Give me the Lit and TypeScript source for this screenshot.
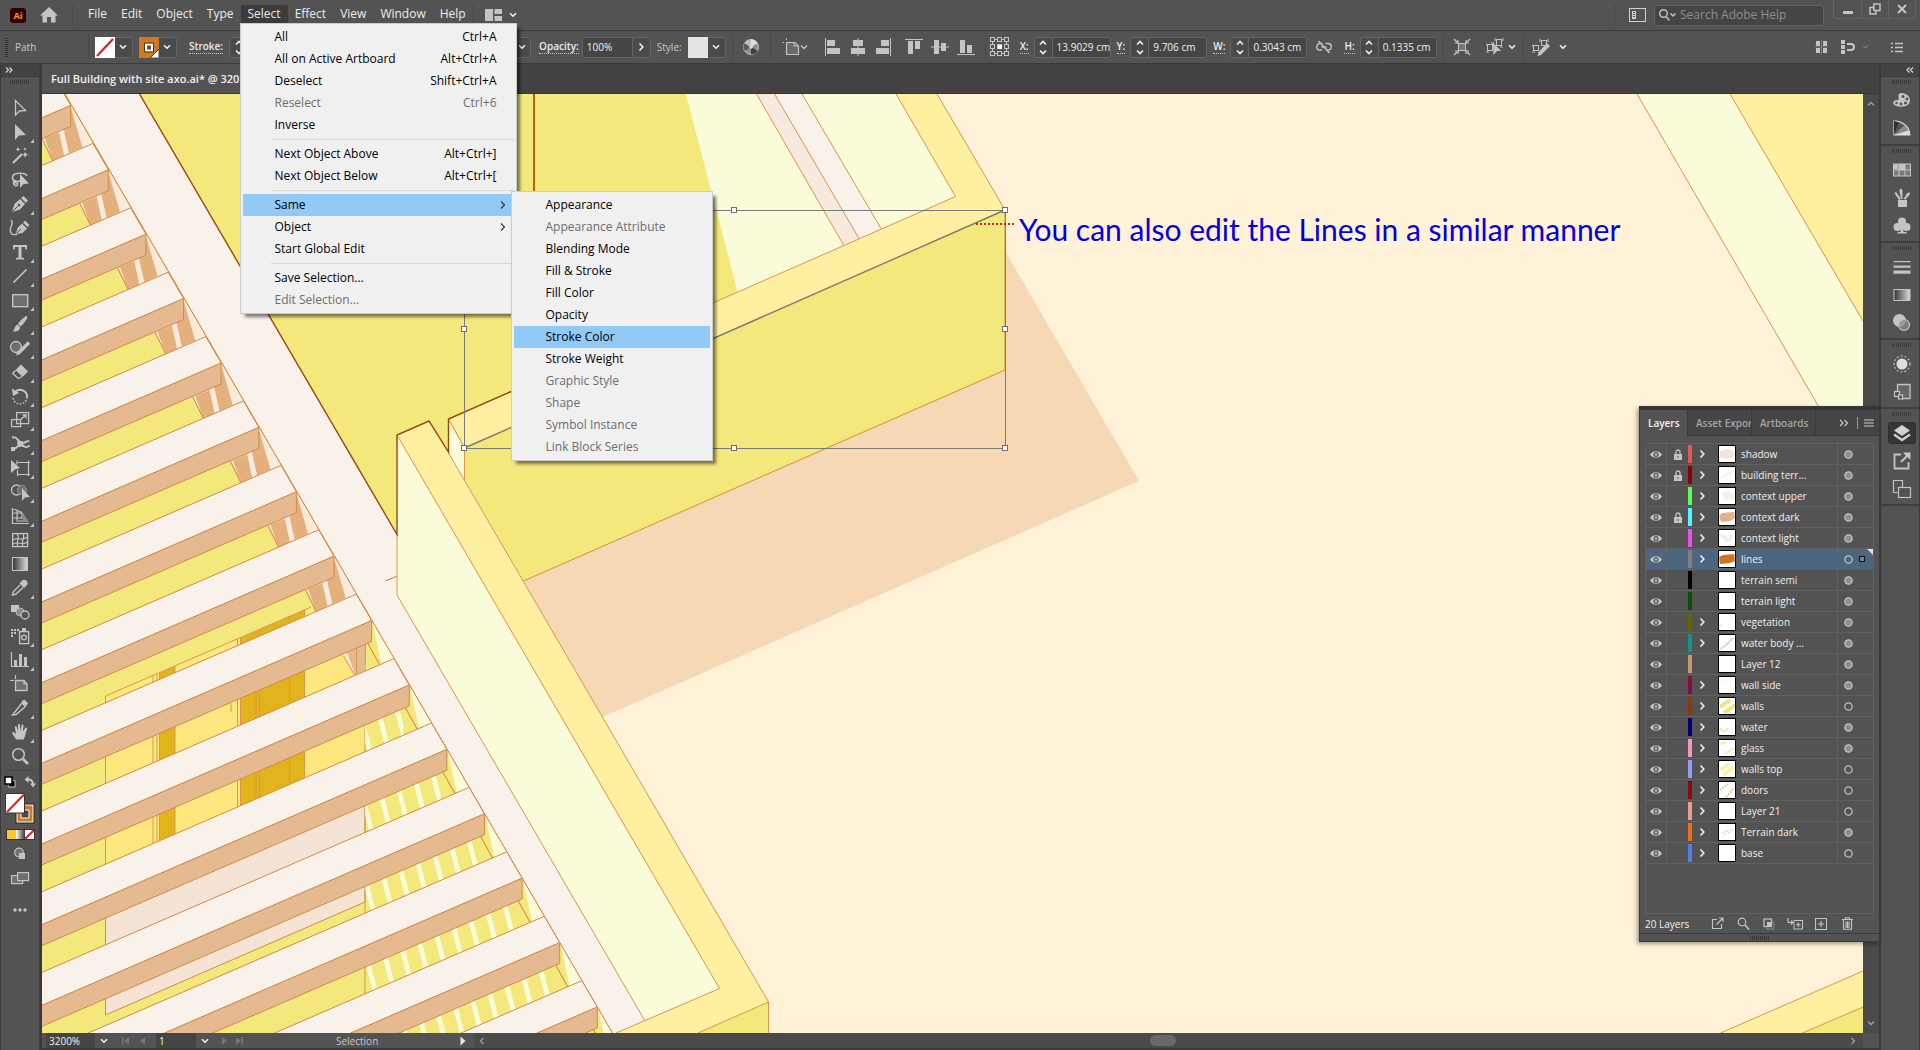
import { LitElement, html, css, svg, nothing, TemplateResult, SVGTemplateResult } from 'lit';
import { customElement, property } from 'lit/decorators.js';
import { classMap } from 'lit/directives/class-map.js';
import { styleMap } from 'lit/directives/style-map.js';

const icon = (w: number, h: number, body: SVGTemplateResult, cls = '') =>
  html`<svg class=${cls} width=${w} height=${h} viewBox="0 0 ${w} ${h}" aria-hidden="true">${body}</svg>`;

const chevDown = () =>
  icon(10, 8, svg`<path d="M2 2.2 5 5.2 8 2.2" fill="none" stroke="#f0f0f0" stroke-width="1.6"/>`);
const chevRight = () =>
  icon(8, 10, svg`<path d="M2.5 1.5 5.8 5 2.5 8.5" fill="none" stroke="#f0f0f0" stroke-width="1.6"/>`);

/* ---------- shared control styles ---------- */
const base = css`
  *, *::before, *::after { box-sizing: border-box; }
  button {
    font: inherit;
    color: inherit;
    background: none;
    border: 0;
    padding: 0;
    margin: 0;
    display: inline-flex;
    align-items: center;
    justify-content: center;
    flex: none;
  }
  input {
    font: inherit;
    color: #f0f0f0;
    background: #454545;
    border: 0;
    padding: 0;
    margin: 0;
    min-width: 0;
    outline: 0;
  }
  svg { display: block; flex: none; }
  ul { list-style: none; margin: 0; padding: 0; }
`;

/* ---------- artwork ---------- */
const STEP_X = 37.62;
const STEP_Y = 64.4;
const RAKE = 0.433;
const slatOrigin = (k: number) => ({ x: 371.6 + k * STEP_X, y: 620.5 + k * STEP_Y });
const range = (a: number, b: number) => Array.from({ length: b - a + 1 }, (_, i) => a + i);

@customElement('art-board')
class ArtBoard extends LitElement {
  static styles = [base, css`
    :host { display: block; position: relative; overflow: hidden; background: #fff2d8; }
    .art { position: absolute; inset: 0; width: 100%; height: 100%; }
    .note {
      position: absolute;
      left: 977px;
      top: 117px;
      margin: 0;
      font: 30px/36px Lato, "Open Sans", sans-serif;
      color: #0000e0;
      white-space: nowrap;
    }
    .y { fill: #f3e87b; }
    .top { fill: #feefa1; }
    .pale { fill: #fafbd9; }
    .cream { fill: #f9f2ea; }
    .lite { fill: #f8eadc; }
    .tan { fill: #e6ba91; }
    .post { fill: #e4b07d; }
    .shade { fill: #f6d8b5; }
    .win { fill: #ffe77f; }
    .gold { fill: #e1b41d; }
    .pink { fill: #f5e4d5; }
    .ln { fill: none; stroke: #d9964f; stroke-width: 1; }
    .edge { stroke: #cf8b48; stroke-width: 1; }
    .dark { fill: none; stroke: #9a4710; stroke-width: 1.4; }
    .sel { fill: none; stroke: #7c7a76; stroke-width: 1; }
    .handle { fill: #fff; stroke: #6e6e6e; stroke-width: 1; }
  `];

  private shape(cls: string, k: number, pts: number[][]) {
    const o = slatOrigin(k);
    return svg`<polygon class=${cls} points=${pts.map(([x, y]) => `${o.x + x},${o.y + y}`).join(' ')} />`;
  }

  private slat(k: number) {
    const { x, y } = slatOrigin(k);
    const left = 30;
    const at = (px: number, py: number) => py + (px - left) * RAKE;
    const qx = x - 15.3;
    const qy = y - 26.3;
    if (x < left) return nothing;
    return svg`
      <polygon class="tan edge" points="${x},${y} ${x},${y + 21} ${left},${at(x, y + 21)} ${left},${at(x, y)}"/>
      <polygon class="cream edge" points="${qx},${qy} ${x},${y} ${left},${at(x, y)} ${left},${at(qx, qy)}"/>`;
  }

  render() {
    return html`
      <svg class="art" viewBox="42 94 1821 939" preserveAspectRatio="xMinYMin slice" role="img" aria-label="Building axonometric">
        <defs>
          <clipPath id="deck"><polygon points="365,600 365,1040 599,1040 365,638"/></clipPath>
        </defs>
        <rect x="42" y="94" width="1900" height="1000" fill="#fff2d8"/>

        <polygon class="y" points="42,94 65,94 612,1033 42,1033"/>
        <polygon class="win" points="105.5,696 311,607 355,676 365,693 365,778 105.5,893"/>
        <polygon class="gold" points="159.5,673 175,666 175,862 159.5,869"/>
        <polygon class="gold" points="240.5,638 304.5,610 304.5,800 240.5,830"/>
        <path class="ln" d="M105.5 1015V696L311 607M153 675V865M157 674V865M159.5 673V865M175 666V860M237.5 639V820M240.5 638V820M256 631V820M259.5 630V820M289.5 616V800M304.5 610V800M231 703v9"/>
        <polygon class="pink edge" points="105.5,885 365,772 365,902 105.5,1015"/>
        <path class="ln" d="M365 650V995"/>
        <g clip-path="url(#deck)">
          ${range(-4, 13).map((n) => {
            const a = 380 + 0.26 * (600 - 800) + 19 * n;
            const b = 380 + 0.26 * (1040 - 800) + 19 * n;
            return svg`<polygon class="pale" points="${a},600 ${a + 5},600 ${b + 5},1040 ${b},1040"/>`;
          })}
        </g>
        ${range(-8, -1).map((k) => svg`
          ${this.shape('lite', k, [[-28.3, 34], [0, 0], [22.3, 38.6], [-17.7, 55.7]])}
          ${this.shape('post', k, [[-26, 33], [-11.6, 27], [-6.3, 51], [-17.7, 55.7]])}
          ${this.shape('post', k, [[-7, 24], [0.7, 4], [11.7, 42], [-1.7, 48]])}
          ${this.shape('ln', k, [[-28.3, 34], [-17.7, 55.7]])}
        `)}
        ${this.shape('lite', 0, [[-28, 34], [-20, 30], [-16.3, 55.5]])}
        ${this.shape('tan', 0, [[-24.5, 32], [-6.5, 22], [-6.5, 50], [-16.3, 55.5]])}
        <path class="ln" d="M343.5 656 355 676M356.5 648V675M365.5 642V672"/>
        ${range(0, 6).map((k) => svg`
          ${this.shape('y', k, [[-5, 20], [0, 0], [22.3, 38.6], [-6, 50]])}
          ${this.shape('pale', k, [[0.7, 1], [22.7, 38.6], [9.7, 43]])}
          ${this.shape('ln', k, [[-4, 22.5], [8, 44.3]])}
        `)}
        ${range(-8, 7).map((k) => this.slat(k))}

        <polygon class="cream" points="65,94 139.5,94 397,535 397,595 645,1021 617,1033 612,1033"/>
        <path class="ln" style="stroke:#cc7c35" d="M65 94 612.5 1033M386 580.7 396.7 576.3"/>
        <polygon class="y" points="139.5,94 686,94 738,291 465,448 448,452 429,421 397,435 397,534"/>
        <polygon class="pale" points="686,94 896,94 955.5,196.5 737.5,291.5"/>
        <polygon fill="#f7e9de" points="756.5,94 774.5,94 859,238.5 843.5,245"/>
        <polygon class="cream" points="774.5,94 802,94 881,228.5 859,238.5"/>
        <path class="ln" d="M756.5 94 843.5 245M774.5 94 859 238.5M802 94 881 228.5"/>
        <polygon class="shade" points="1005,251 1139,481 602.5,717 523,581 1005,370"/>
        <polygon class="top" points="448.5,419 955.5,196.5 896,94 937,94 1005,210 464.5,448"/>
        <path class="ln" d="M896 94 955.5 196.5 448.5 419 464.5 448M937 94 1005 210"/>
        <polygon class="y" points="464.5,448 1005,210 1005,370 523.5,581 464.5,480"/>
        <path class="ln" style="stroke:#d98c3a" d="M1005 210V370L523.5 581"/>
        <polygon class="pale" points="448.5,419 464.5,448 464.5,480 448.5,452"/>
        <path class="ln" d="M448.5 419 464.5 448V480"/>
        <polygon class="pale" points="397,435 397,595 645,1021 719.5,988.5"/>
        <polygon class="top" points="397,435 429,421 768.5,1002 698,1033 616,1033 719.5,988.5"/>
        <polygon class="y" points="768.5,1002 768.5,1033 698,1033"/>
        <path class="ln" d="M397 435 719.5 988.5 616 1033M397 534V595L645 1021M448.5 453 768.5 1002V1033M768.5 1002 698 1033"/>
        <path class="dark" d="M139.5 94 397 534.5V435L429 421 448.5 452V419L600 352.5"/>
        <path d="M534 94V260" fill="none" stroke="#b0651c" stroke-width="2"/>

        <polygon class="pale" points="1637,94 1730,94 1863,321 1863,483"/>
        <polygon class="top" points="1730,94 1863,94 1863,321"/>
        <path class="ln" d="M1637 94 1863 483M1730 94 1863 321"/>
        <polygon class="top" points="1720.5,1033 1863,971 1863,1033"/>
        <polygon class="y" points="1802.5,1033 1863,1007 1863,1033"/>
        <path class="ln" d="M1720.5 1033 1863 971M1802.5 1033 1863 1007"/>

        <path class="sel" d="M464.5 210.5H1005.5V448.5H464.5Z"/>
        <path class="sel" style="stroke-width:1.4" d="M464.5 448 1005 210"/>
        ${[[464, 329], [464, 448], [734, 210], [734, 448], [1005, 210], [1005, 329], [1005, 448]].map(([x, y]) =>
          svg`<rect class="handle" x=${x - 2.5} y=${y - 2.5} width="5" height="5"/>`)}
        <path d="M976 224H1016" stroke="#c8281e" stroke-width="2" stroke-dasharray="2 2"/>
      </svg>
      <p class="note">You can also edit the Lines in a similar manner</p>
    `;
  }
}

/* ---------- menu bar ---------- */
interface Entry { label?: string; keys?: string; off?: boolean; sub?: Entry[]; hot?: boolean; more?: boolean; }

const SAME: Entry[] = [
  { label: 'Appearance' }, { label: 'Appearance Attribute', off: true }, { label: 'Blending Mode' },
  { label: 'Fill & Stroke' }, { label: 'Fill Color' }, { label: 'Opacity' }, { label: 'Stroke Color', hot: true },
  { label: 'Stroke Weight' }, { label: 'Graphic Style', off: true }, { label: 'Shape', off: true },
  { label: 'Symbol Instance', off: true }, { label: 'Link Block Series', off: true },
];
const SELECT: Entry[] = [
  { label: 'All', keys: 'Ctrl+A' }, { label: 'All on Active Artboard', keys: 'Alt+Ctrl+A' },
  { label: 'Deselect', keys: 'Shift+Ctrl+A' }, { label: 'Reselect', keys: 'Ctrl+6', off: true }, { label: 'Inverse' }, {},
  { label: 'Next Object Above', keys: 'Alt+Ctrl+]' }, { label: 'Next Object Below', keys: 'Alt+Ctrl+[' }, {},
  { label: 'Same', hot: true, more: true, sub: SAME }, { label: 'Object', more: true }, { label: 'Start Global Edit' }, {},
  { label: 'Save Selection...' }, { label: 'Edit Selection...', off: true },
];

@customElement('menu-bar')
class MenuBar extends LitElement {
  static styles = [base, css`
    :host {
      display: flex;
      align-items: center;
      height: 31px;
      background: #535353;
      border-bottom: 1px solid #3a3a3a;
      font: 12px/16px "Open Sans", "Noto Sans", sans-serif;
      color: #ececec;
    }
    .logo { display: flex; align-items: center; justify-content: center; width: 16px; height: 15px; margin-left: 10px; background: #330000; border-radius: 3px; color: #ff9a00; font: 700 9px/15px "Open Sans", sans-serif; }
    .home { margin-left: 14px; }
    .rule { width: 1px; height: 20px; background: #484848; flex: none; }
    .home + .rule { margin-left: 14px; }
    .menus { display: flex; align-self: stretch; align-items: flex-start; padding: 5px 0 0 8px; }
    .menus > li { position: relative; display: flex; }
    .name { height: 18px; padding: 0 7px; border-radius: 2px 2px 0 0; }
    .open { background: #3b3b3b; }
    .layout { margin-left: 11px; gap: 6px; }
    .fill { flex: 1; }
    .screen { margin: 0 8px 0 14px; }
    .search { display: flex; align-items: center; width: 170px; height: 21px; background: #454545; border: 1px solid #636363; border-radius: 3px; padding-left: 3px; gap: 3px; }
    .search input { flex: 1; }
    .search input::placeholder { color: #8e8e8e; opacity: 1; }
    .window { display: flex; align-self: flex-start; margin: 0 4px 0 9px; border: 1px solid #636363; border-top: 0; border-radius: 0 0 3px 3px; }
    .window button { width: 27px; height: 18px; }
    .window button + button { border-left: 1px solid #636363; }

    .drop {
      position: absolute;
      z-index: 5;
      padding: 2px;
      background: #f0f0f0;
      border: 1px solid #cccccc;
      box-shadow: 4px 4px 3px -1px rgba(0, 0, 0, 0.5);
      color: #000;
    }
    .first { left: -1px; top: 18px; width: 277px; }
    .second { left: 268px; top: -3px; width: 202px; }
    .drop li { position: relative; }
    .drop button { display: flex; width: 100%; height: 22px; padding: 0 17px 0 32px; justify-content: flex-start; text-align: left; }
    .drop button span:first-child { flex: 1; }
    .drop button svg { margin-right: -10px; }
    .hot > button { background: #91c9f7; }
    .off > button { color: #6d6d6d; }
    .sep { height: 7px; padding: 3px 0 0 28px; }
    .sep::before { content: ""; display: block; height: 1px; background: #d7d7d7; }
  `];

  private drop(entries: Entry[], cls: string): TemplateResult {
    return html`<ul class="drop ${cls}">
      ${entries.map((e) => e.label === undefined
        ? html`<li class="sep"></li>`
        : html`<li class=${classMap({ hot: !!e.hot, off: !!e.off })}>
            <button ?disabled=${!!e.off}>
              <span>${e.label}</span>
              ${e.keys ? html`<span>${e.keys}</span>` : nothing}
              ${e.more ? icon(8, 10, svg`<path d="M2 1.5 5.5 5 2 8.5" fill="none" stroke="#333" stroke-width="1.1"/>`) : nothing}
            </button>
            ${e.sub ? this.drop(e.sub, 'second') : nothing}
          </li>`)}
    </ul>`;
  }

  render() {
    return html`
      <span class="logo">Ai</span>
      <button class="home" aria-label="Home">${icon(18, 16, svg`<path d="M9 0 18 8.5H15.5V15.5H11V10H7V15.5H2.5V8.5H0Z" fill="#c4c4c4"/>`)}</button>
      <span class="rule"></span>
      <ul class="menus">
        ${['File', 'Edit', 'Object', 'Type', 'Select', 'Effect', 'View', 'Window', 'Help'].map((m) => html`
          <li>
            <button class=${classMap({ name: true, open: m === 'Select' })}>${m}</button>
            ${m === 'Select' ? this.drop(SELECT, 'first') : nothing}
          </li>`)}
      </ul>
      <span class="rule"></span>
      <button class="layout" aria-label="Arrange documents">
        ${icon(17, 12, svg`<path d="M0 0H8V12H0ZM9.500 0H17V5H9.500ZM9.500 7H17V12H9.500Z" fill="#c4c4c4"/>`)} ${chevDown()}
      </button>
      <span class="fill"></span>
      <span class="rule"></span>
      <button class="screen" aria-label="Workspace">
        ${icon(17, 14, svg`<rect x="0.500" y="0.500" width="16" height="13" fill="none" stroke="#d0d0d0"/><path d="M3 3H7V11H3Z" fill="#d0d0d0"/><path d="M4 4.500H6M4 6.500H6M4 8.500H6" stroke="#535353"/>`)}
      </button>
      <label class="search">
        ${icon(19, 14, svg`<circle cx="5.500" cy="5.500" r="3.800" fill="none" stroke="#c4c4c4" stroke-width="1.400"/><path d="M8 8.500 11.500 12.500M12.500 5.500 15 8 17.500 5.500" fill="none" stroke="#c4c4c4" stroke-width="1.500"/>`)}
        <input aria-label="Search Adobe Help" placeholder="Search Adobe Help">
      </label>
      <span class="window">
        <button aria-label="Minimize">${icon(12, 12, svg`<path d="M1 8H11V11H1Z" fill="#c4c4c4"/>`)}</button>
        <button aria-label="Restore">${icon(12, 12, svg`<path d="M4.800 7.500V1H11V7.500H4.800M4.800 4.500H1V11H7V7.500" fill="none" stroke="#c4c4c4" stroke-width="1.500"/>`)}</button>
        <button aria-label="Close">${icon(12, 12, svg`<path d="M2 2 10 10M10 2 2 10" stroke="#c4c4c4" stroke-width="2"/>`)}</button>
      </span>
    `;
  }
}

/* ---------- control bar ---------- */
const G = '#c4c4c4';
@customElement('control-bar')
class ControlBar extends LitElement {
  static styles = [base, css`
    :host {
      display: flex;
      align-items: center;
      height: 33px;
      background: #535353;
      border-bottom: 1px solid #3a3a3a;
      font: 10px/14px "Open Sans", "Noto Sans", sans-serif;
      color: #ececec;
      white-space: nowrap;
    }
    .grip { width: 3px; height: 19px; margin-left: 5px; background: repeating-linear-gradient(#333 0 1px, #535353 1px 2px); flex: none; }
    .kind { width: 80px; padding-left: 7px; color: #c8c8c8; }
    .rule { width: 1px; height: 24px; background: #484848; flex: none; }
    .box { display: flex; height: 21px; border: 1px solid #636363; border-radius: 2px; background: #4b4b4b; flex: none; }
    .box input { padding-left: 4px; }
    .box button { width: 17px; }
    .combo { margin-left: 6px; }
    .combo svg:first-child { margin: -1px 0 -1px -1px; }
    .weight { width: 302px; margin-left: 6px; }
    .weight input { flex: 1; }
    .pct { width: 69px; margin-left: 3px; }
    .pct input { width: 50px; border-right: 1px solid #636363; }
    .num { width: 77px; margin-left: 5px; }
    .num input { width: 58px; border-left: 1px solid #636363; }
    .tag { margin-left: 8px; font-weight: 600; border-bottom: 1px dotted #c8c8c8; line-height: 13px; }
    .axis { margin-left: 6px; }
    .first { margin-left: 12px; }
    .plain { margin-left: 6px; color: #c8c8c8; }
    .wheel { width: 37px; }
    .doc { width: 48px; }
    .al { width: 26px; }
    .mid { margin-left: 4px; }
    .ref { width: 28px; }
    .link { width: 28px; margin-left: 3px; }
    .iso { width: 37px; }
    .pick { width: 42px; gap: 3px; }
    .edit { width: 52px; gap: 8px; }
    .rest { flex: 1; }
    .pads { gap: 12px; margin-right: 20px; }
    .menu { margin-right: 16px; }
    .gap { margin-left: 6px; }
  `];

  private spin() {
    return html`<button aria-label="Step">${icon(10, 17, svg`<path d="M2 5.500 5 2.500 8 5.500M2 11.500 5 14.500 8 11.500" fill="none" stroke="#f0f0f0" stroke-width="1.600"/>`)}</button>`;
  }
  private num(id: string, name: string, value: string) {
    return html`<label class="tag axis" for=${id}>${name}</label>
      <span class="box num">${this.spin()}<input id=${id} .value=${value}></span>`;
  }
  private al(name: string, body: SVGTemplateResult, cls = '') {
    return html`<button class="al ${cls}" aria-label=${name}>${icon(18, 18, body)}</button>`;
  }

  render() {
    const sq = (x: number, y: number) => svg`<rect x=${x} y=${y} width="4" height="4" fill="none" stroke=${G}/>`;
    return html`
      <span class="grip"></span>
      <span class="kind">Path</span>
      <span class="rule"></span>
      <span class="box combo">
        ${icon(20, 21, svg`<path d="M0 0H20V21H0Z" fill="#fff"/><path d="M2 19 18 2" stroke="#e02020" stroke-width="2.200"/>`)}
        <button aria-label="Fill">${chevDown()}</button>
      </span>
      <span class="box combo">
        ${icon(20, 21, svg`<path d="M0 0H20V21H0Z" fill="#cd7a22"/><path d="M7 7.500H13V13.500H7Z" fill="#555" stroke="#fff" stroke-width="2"/><path d="M5.500 6H14.500V15H5.500Z" fill="none" stroke="#222" stroke-width=".8"/><path d="M20 12V21H11Z" fill="#fff" stroke="#222" stroke-width=".8"/>`)}
        <button aria-label="Stroke color">${chevDown()}</button>
      </span>
      <label class="tag first" for="weight">Stroke:</label>
      <span class="box weight">${this.spin()}<input id="weight"><button aria-label="Stroke profile">${chevDown()}</button></span>
      <label class="tag" for="opacity">Opacity:</label>
      <span class="box pct"><input id="opacity" value="100%"><button aria-label="Opacity options">${chevRight()}</button></span>
      <span class="plain">Style:</span>
      <span class="box combo">
        ${icon(20, 21, svg`<path d="M0 0H20V21H0Z" fill="#e3e3e3"/>`)}
        <button aria-label="Graphic style">${chevDown()}</button>
      </span>
      <span class="rule gap"></span>
      <button class="wheel" aria-label="Recolor artwork">${icon(18, 18, svg`<circle cx="9" cy="9" r="7.500" fill="#8d8d8d" stroke="#c4c4c4"/><path d="M9 9V1.500A7.500 7.500 0 0 1 15.500 5.300Z" fill="#e2e2e2"/><path d="M9 9 15.500 12.700A7.500 7.500 0 0 1 9 16.500Z" fill="#3e3e3e"/><path d="M9 9 2.500 12.700A7.500 7.500 0 0 1 2.500 5.300Z" fill="#5b5b5b"/><path d="M9 9 2.500 5.300A7.500 7.500 0 0 1 9 1.500Z" fill="#bdbdbd"/><circle cx="9" cy="9" r="1.800" fill="#ddd"/>`)}</button>
      <span class="rule"></span>
      <button class="doc" aria-label="Align to artboard">${icon(26, 18, svg`<path d="M4.500 4.500H13L16.500 8V16.500H4.500Z" fill="#6a6a6a" stroke="#c4c4c4" stroke-width="1.200"/><path d="M0.500 4.500H2M4.500 0.500V2M12 4.500V8H16" stroke="#c4c4c4" fill="none"/><path d="M19 7.500 22 10.500 25 7.500" fill="none" stroke="#c4c4c4" stroke-width="1.300"/>`)}</button>
      ${this.al('Align left', svg`<path d="M2 0H3V18H2ZM4 2H12V8H4ZM4 10H17V16H4Z" fill=${G}/>`)}
      ${this.al('Align center', svg`<path d="M8.500 0H9.500V18H8.500ZM4 2H14V8H4ZM2 10H16V16H2Z" fill=${G}/>`)}
      ${this.al('Align right', svg`<path d="M15 0H16V18H15ZM6 2H14V8H6ZM1 10H14V16H1Z" fill=${G}/>`)}
      ${this.al('Align top', svg`<path d="M0 1H18V2H0ZM3 3H8V16H3ZM10 3H15V11H10Z" fill=${G}/>`, 'mid')}
      ${this.al('Align middle', svg`<path d="M0 8.500H18V9.500H0ZM3 2H8V16H3ZM10 5H15V13H10Z" fill=${G}/>`)}
      ${this.al('Align bottom', svg`<path d="M0 16H18V17H0ZM3 2H8V15H3ZM10 7H15V15H10Z" fill=${G}/>`)}
      <span class="rule gap"></span>
      <button class="ref" aria-label="Reference point">${icon(20, 20, svg`${[0.5, 7.5, 14.5].map((y) => [0.5, 7.5, 14.5].map((x) => sq(x, y)))}<path d="M8 8H12V12H8Z" fill="#fff"/><path d="M5 2.500H7M12 2.500H14M5 16.500H7M12 16.500H14M2.500 5V7M2.500 12V14M16.500 5V7M16.500 12V14" stroke=${G}/>`)}</button>
      ${this.num('fx', 'X:', '13.9029 cm')}
      ${this.num('fy', 'Y:', '9.706 cm')}
      ${this.num('fw', 'W:', '0.3043 cm')}
      <button class="link" aria-label="Constrain proportions">${icon(16, 14, svg`<path d="M6.500 3.500H4A3 3 0 0 0 4 10H6M9.500 3.500H12A3 3 0 0 1 12 10H10M5.500 7H10.500M2.500 1 13.500 13" fill="none" stroke=${G} stroke-width="1.400"/>`)}</button>
      ${this.num('fh', 'H:', '0.1335 cm')}
      <span class="rule gap"></span>
      <button class="iso" aria-label="Isolate">${icon(18, 18, svg`<rect x="5.500" y="5.500" width="7" height="7" fill="#777" stroke=${G}/><path d="M1 1 5 5M17 1 13 5M1 17 5 13M17 17 13 13" stroke=${G} stroke-width="1.300"/><path d="M5 2V5H2M13 2V5H16M5 16V13H2M13 16V13H16" fill="none" stroke=${G} stroke-width="1.200"/>`)}</button>
      <button class="pick" aria-label="Select similar">${icon(18, 18, svg`<rect x="1.500" y="6.500" width="5" height="6" fill="none" stroke=${G}/><rect x="10.500" y="1.500" width="5" height="6" fill="none" stroke=${G}/><path d="M0 5V8M8 5H5M0 14H3M9 0V3M17 0V3M17 9H14" stroke=${G}/><path d="M7 4.500 15 13H11L7.500 17Z" fill=${G}/>`)}${chevDown()}</button>
      <span class="rule"></span>
      <button class="edit" aria-label="Edit similar">${icon(18, 18, svg`<rect x="1.500" y="7.500" width="5" height="5" fill="none" stroke=${G}/><rect x="9.500" y="2.500" width="5" height="5" fill="none" stroke=${G}/><path d="M0 6V9M0 14H3M8 1V4M16 1V4" stroke=${G}/><path d="M15 5 18 8 9 17 5.500 18 6.500 14Z" fill=${G}/>`)}${chevDown()}</button>
      <span class="rest"></span>
      <button class="pads" aria-label="Snap">
        ${icon(14, 14, svg`<path d="M1 1H5V6H1ZM8 1H12V6H8ZM1 8H5V13H1ZM8 8H12V13H8Z" fill=${G}/><path d="M6.500 0V14M0 7H13" stroke="#8a8a8a" stroke-width=".8"/>`)}
        ${icon(30, 14, svg`<path d="M0 0H4V4H0ZM0 5H4V9H0ZM0 10H4V14H0Z" fill=${G}/><path d="M6 4H10A3 3 0 0 1 10 10H6" fill="none" stroke=${G} stroke-width="2"/><path d="M22 5.500 24.500 8 27 5.500" fill="none" stroke="#7a7a7a" stroke-width="1.200"/>`)}
      </button>
      <button class="menu" aria-label="Panel options">${icon(13, 11, svg`<path d="M0 1.500H2M0 5.500H2M0 9.500H2M4 1.500H12M4 5.500H12M4 9.500H12" stroke=${G} stroke-width="1.500"/>`)}</button>
    `;
  }
}

/* ---------- tool bar ---------- */
const st = (d: string, w = 1.4) => svg`<path d=${d} fill="none" stroke=${G} stroke-width=${w}/>`;
const fl = (d: string) => svg`<path d=${d} fill=${G}/>`;
const TOOLS: [string, SVGTemplateResult, boolean][] = [
  ['Selection', st('M7.500 4.500V19L11.500 15 17.500 14.500Z', 1.300), false],
  ['Direct selection', fl('M7 4V20L11 15.500 18 15Z'), true],
  ['Magic wand', svg`${st('M5 19 14 10', 2.200)}${fl('M17 8l1.200 2 2.200.6-2.200.8-1.200 2-1-2-2-.8 2-.6zM10 3l.8 1.700 1.700.5-1.700.8L10 7.500 9.200 6 7.500 5.200l1.700-.5zM17 3l.6 1.400 1.400.6-1.400.6L17 7l-.6-1.400L15 5l1.400-.6z')}`, false],
  ['Lasso', svg`${st('M14 12C9 15 4 13 4.500 9 5 4.500 17 4 19 8M6 13C4.500 16 8 19 9.500 17 10.500 15 7.500 14 6.500 15', 1.600)}${fl('M12 6V20L15.500 16 21 15.500Z')}`, false],
  ['Pen', svg`${fl('M4 20 6.500 12 12 7 17 12 12 17.500ZM13 6 15.500 4 20 8.500 18 11Z')}<path d="M4.500 19.500 10.500 13.500" stroke="#535353"/><circle cx="11" cy="13" r="1.300" fill="#535353"/>`, true],
  ['Curvature', svg`${fl('M8 18 9.500 12 14 7.500 19 12.500 14.500 17ZM15 6.500 17 4.500 21.500 9 19.500 11Z')}<path d="M8.500 17.500 13 13" stroke="#535353"/>${st('M3 4C7 7 0 12 3 17 4 19 7 19 9 18')}`, false],
  ['Type', fl('M5 5H19V9.500H17.500L17 7H13.500V17.500L16 18V19.500H8V18L10.500 17.500V7H7L6.500 9.500H5Z'), true],
  ['Line', st('M5.500 18.500 18.500 5.500', 1.600), true],
  ['Rectangle', svg`<rect x="4.700" y="6.700" width="15" height="12" fill="#6f6f6f" stroke=${G} stroke-width="1.400"/>`, true],
  ['Paintbrush', fl('M19 4C21 6 13 14.500 12.500 14.500L10 12C10 11.500 17 3 19 4ZM9.500 12.500 12 15C12 19 8 20 4.500 19.500 7 18 6 14 9.500 12.500Z'), true],
  ['Shaper', svg`<circle cx="8" cy="11" r="5.500" fill="#6f6f6f" stroke=${G} stroke-width="1.300"/>${st('M11 16.500 21 6.500', 3.400)}${fl('M8 19.500 9.500 15 12.500 18Z')}`, true],
  ['Eraser', svg`${fl('M13 4.500 20 11.500 14.500 17 7.500 10Z')}${st('M7.500 10.500 4.700 13.500 10.500 18.500 14 16.500', 1.400)}`, true],
  ['Rotate', svg`${st('M7 8C11 3.500 19.500 6.500 19 13', 2)}${fl('M4 4.500 5 12 11 9Z')}<path d="M19 13A7 7 0 0 1 5 13" fill="none" stroke=${G} stroke-width="1.600" stroke-dasharray="1.600 1.600"/>`, true],
  ['Scale', svg`<rect x="8.600" y="4.600" width="12" height="11" fill="none" stroke=${G} stroke-width="1.300"/><rect x="3.600" y="11.600" width="9" height="7" fill="none" stroke=${G} stroke-width="1.300"/>${st('M12 12 18 7M14.500 7H18V10.500', 1.300)}`, true],
  ['Width', svg`${st('M4 5.500C9 4 9 8 13 11 16 13 18 7.500 21.500 9.500M5 17C10 17 9 12 13 13 17 14 18 17 21.500 13.500', 2)}${fl('M3 15H7V19H3ZM9 9.500 15 9V14.500L10 15Z')}`, true],
  ['Free transform', svg`${fl('M3 4V17L7 13.500 12 12Z')}${st('M10 6.500H20.500V18.500H9.500V14M9 4.500V8.500M20.500 4.500V8.500M9.500 16V20M20.500 16V20M18 6.500H22M18 18.500H22', 1.200)}`, true],
  ['Shape builder', svg`<circle cx="8.500" cy="10" r="5" fill="none" stroke=${G} stroke-width="1.300"/><circle cx="14" cy="10" r="4.500" fill="#6f6f6f" stroke=${G} stroke-dasharray="1.500 1.300"/>${fl('M14 8V21L17 17.500 22 17Z')}`, true],
  ['Perspective grid', svg`${st('M4.500 4V19.500H14M4.500 9H14M4.500 14H14M9 6V16M14 8.500V15M4.500 4.500 14 8.500', 1.200)}<path d="M15 9 21 18H8V16H15Z" fill="#8b8b8b"/>${st('M4 19.500H21', 1)}`, true],
  ['Mesh', svg`<rect x="4.600" y="5.600" width="15" height="13" fill="none" stroke=${G} stroke-width="1.300"/>${st('M5 12C9 8 13 14 19.500 9M9 6C13 10 7 14 10 18.500M15 6C18 10 12 13 15 18.500M5 16C10 13 15 18 19.500 14', 1.100)}`, false],
  ['Gradient', svg`<rect x="4.500" y="5.500" width="15" height="13" fill="url(#ramp)" stroke=${G}/>`, false],
  ['Eyedropper', svg`${fl('M14 4.500C17 2 21 6 19 9L16 12 11.500 7.500Z')}${st('M12 9 5.500 15.500 4.500 19 8 18 15 11.500', 1.400)}`, true],
  ['Blend', svg`${fl('M3 5H11V12H3Z')}<circle cx="12" cy="12" r="4" fill="#8b8b8b" stroke="#c4c4c4" stroke-width=".8"/><circle cx="17" cy="15" r="4" fill="#535353" stroke=${G} stroke-width="1.300"/>`, false],
  ['Symbol sprayer', svg`<rect x="11.600" y="7.600" width="9" height="12" fill="none" stroke=${G} stroke-width="1.400"/><circle cx="16" cy="13.500" r="2.300" fill="none" stroke=${G} stroke-width="1.300"/>${fl('M14 4H18V7H14ZM3 5H5V7H3ZM6 5H8V7H6ZM9 5H11V7H9ZM3 8H5V10H3ZM6 8H8V10H6ZM3 11H5V13H3Z')}`, true],
  ['Column graph', svg`${st('M3.500 4V18.500H21', 1.200)}${fl('M6 12H9V18H6ZM11 6H14V18H11ZM16 9H19V18H16Z')}`, true],
  ['Artboard', svg`<path d="M7.500 8.500H16L19 12V18.500H7.500Z" fill="#6f6f6f" stroke=${G} stroke-width="1.300"/>${st('M2 8.500H6M7.500 3V7M16 8.500V12H19', 1.200)}`, false],
  ['Slice', svg`${fl('M14 4.500 17 4 20 7.500 18 10 14 7Z')}${st('M14 7 4.500 19 8 18.500 17.500 10.500Z', 1.400)}`, true],
  ['Hand', fl('M8 19.500C6.500 16.500 4 14 4 12.500 5 11 7 13 8 14L6.800 7C7 5.500 8.500 5.700 8.700 7L9.800 11 10 5C10.300 3.500 12 3.500 12 5L12.200 11 13.700 5.300C14.200 4 15.800 4.500 15.500 6L14.800 11.500 17.300 8C18.200 7 19.500 8 19 9.300 17.500 13 17.500 17 15.500 19.500Z'), true],
  ['Zoom', svg`<circle cx="10.500" cy="10.500" r="5.800" fill="none" stroke=${G} stroke-width="1.500"/>${st('M15 15 20 20', 2.600)}`, false],
];

@customElement('tool-bar')
class ToolBar extends LitElement {
  static styles = [base, css`
    :host { display: flex; flex-direction: column; align-items: center; background: #535353; border-left: 1px solid #3a3a3a; border-right: 1px solid #3f3f3f; }
    .head { width: 100%; height: 13px; padding-left: 4px; background: #434343; border-bottom: 1px solid #3a3a3a; flex: none; justify-content: flex-start; }
    .grip { width: 20px; height: 4px; margin: 3px 0 12px; background: repeating-linear-gradient(90deg, #3a3a3a 0 1px, #535353 1px 2px); flex: none; }
    .tool { position: relative; width: 36px; height: 24px; }
    .more::after { content: ""; position: absolute; right: 4px; bottom: 1px; border: 2px solid; border-color: transparent #c4c4c4 #c4c4c4 transparent; }
    .rule { width: 30px; height: 1px; margin-top: 2px; background: #484848; flex: none; }
    .swap { display: flex; justify-content: space-between; width: 32px; margin: 5px 0 5px; }
    .modes { display: flex; margin: 5px 0 4px; border: 1px solid #333; }
    .tail { display: flex; flex-direction: column; gap: 2px; align-items: center; }
  `];
  render() {
    return html`
      <button class="head" aria-label="Expand">${icon(10, 8, svg`<path d="M1 1.500 3.500 4 1 6.500M4.500 1.500 7 4 4.500 6.500" fill="none" stroke="#d0d0d0" stroke-width="1.300"/>`)}</button>
      <span class="grip"></span>
      ${TOOLS.map(([name, body, more]) => html`
        <button class=${classMap({ tool: true, more })} aria-label=${name}>
          ${icon(24, 24, svg`<defs><linearGradient id="ramp"><stop offset="0" stop-color="#333"/><stop offset="1" stop-color="#ddd"/></linearGradient></defs>${body}`)}
        </button>`)}
      <span class="rule"></span>
      <span class="swap">
        <button aria-label="Default fill and stroke">${icon(12, 12, svg`<rect x="5" y="5" width="6" height="6" fill="#000" stroke="#ccc"/><rect x="5" y="5" width="5" height="5" fill="#000"/><rect x="1" y="1" width="7" height="7" fill="#fff" stroke="#000" stroke-width="1.500"/>`)}</button>
        <button aria-label="Swap fill and stroke">${icon(12, 12, svg`<path d="M3 3.500C7 3 9 5 9 8.500" fill="none" stroke=${G} stroke-width="2"/><path d="M4.500 0V7L0.500 3.500ZM6 7.500H12L9 11.500Z" fill=${G}/>`)}</button>
      </span>
      <button aria-label="Fill and stroke">${icon(30, 31, svg`<path d="M11 11H29V30H11Z" fill="#fff" stroke="#222"/><path d="M12.500 12.500H27.500V28.500H12.500Z" fill="#cd7a22"/><path d="M16 17H24V25H16Z" fill="#4a4a4a" stroke="#fff"/><path d="M.5.500H19.500V20H.5Z" fill="#fff" stroke="#333"/><path d="M2 19 19 1.500" stroke="#e01f1f" stroke-width="2"/>`)}</button>
      <span class="modes">
        <button aria-label="Color">${icon(9, 9, svg`<path d="M0 0H9V9H0Z" fill="#fcc72f"/>`)}</button>
        <button aria-label="Gradient fill">${icon(9, 9, svg`<defs><linearGradient id="m"><stop offset="0" stop-color="#fff"/><stop offset="1" stop-color="#333"/></linearGradient></defs><path d="M0 0H9V9H0Z" fill="url(#m)"/>`)}</button>
        <button aria-label="None">${icon(9, 9, svg`<path d="M0 0H9V9H0Z" fill="#fff"/><path d="M0 9 9 0" stroke="#e01f1f" stroke-width="2"/>`)}</button>
      </span>
      <span class="tail">
        <button aria-label="Drawing mode">${icon(24, 20, svg`<circle cx="11" cy="8.500" r="4.300" fill="#6f6f6f" stroke=${G} stroke-width="1.200"/><path d="M11 9H17V15H11Z" fill=${G}/>`)}</button>
        <button aria-label="Screen mode">${icon(24, 24, svg`<rect x="3.600" y="9.600" width="11" height="8" fill="#6f6f6f" stroke=${G} stroke-width="1.200"/><rect x="9.600" y="6.600" width="11" height="8" fill="#6f6f6f" stroke=${G} stroke-width="1.200"/>`)}</button>
        <button aria-label="Edit toolbar">${icon(24, 36, svg`<circle cx="7" cy="18" r="1.700" fill=${G}/><circle cx="12" cy="18" r="1.700" fill=${G}/><circle cx="17" cy="18" r="1.700" fill=${G}/>`)}</button>
      </span>
    `;
  }
}

/* ---------- right dock ---------- */
const DOCK: [string, SVGTemplateResult][][] = [
  [
    ['Color', svg`<path d="M11 4C17 4 20 8 20 11.500 20 16 15 18.500 9 17.500 4 17 2 14 4 12 6 10.500 7.500 12 8.500 10.500 9.500 9 6.500 5 11 4Z" fill=${G}/><circle cx="13" cy="7.500" r="1.500" fill="#535353"/><circle cx="17" cy="10" r="1.400" fill="#535353"/><circle cx="6.500" cy="14" r="1.200" fill="#535353"/><circle cx="11" cy="15" r="1.400" fill="#535353"/><circle cx="15.500" cy="14" r="1.500" fill="#535353"/>`],
    ['Color guide', svg`<path d="M4 4A15 15 0 0 1 20 18H4Z" fill="#8b8b8b" stroke="#ddd" stroke-width="1.100"/><path d="M4 18V4L9 5.500Z" fill="#2e2e2e"/><path d="M4 18 9 5.500 14 8.500Z" fill="#555"/><path d="M4 18 18.500 13.500 20 18Z" fill="#ddd"/>`],
  ],
  [
    ['Swatches', svg`<rect x="3.500" y="6" width="17" height="12" fill="#7a7a7a" stroke=${G}/><path d="M9 6H15V12H9ZM4 6.500H8V11H4Z" fill=${G}/><path d="M3 12H21M9 6V18M15 6V18" stroke=${G}/>`],
    ['Brushes', fl('M8 14H17V21H8ZM9 14 5 8C4 6 6 5.500 7 7L11 13ZM11 13 9.500 5C9.500 2 12.500 2 12.500 5L12.500 13ZM13.500 13 16 9C16 7 20 6 20 7 20 9 17.500 11 15.500 13.500Z')],
    ['Symbols', svg`<circle cx="12" cy="7.500" r="4" fill=${G}/><circle cx="7.500" cy="13" r="4" fill=${G}/><circle cx="16.500" cy="13" r="4" fill=${G}/>${fl('M11.300 10H12.700L13.500 18H16.500V19.500H7.500V18H10.500Z')}`],
  ],
  [
    ['Stroke', fl('M3.500 6H20.500V7.200H3.500ZM3.500 10.500H20.500V12.700H3.500ZM3.500 15.500H20.500V18.700H3.500Z')],
    ['Gradient', svg`<defs><linearGradient id="g"><stop offset="0" stop-color="#333"/><stop offset="1" stop-color="#ddd"/></linearGradient></defs><rect x="4" y="6.500" width="16" height="11" fill="url(#g)" stroke=${G}/>`],
    ['Transparency', svg`<circle cx="9.500" cy="9.500" r="6.500" fill=${G}/><circle cx="14" cy="14" r="5.500" fill="#8b8b8b" fill-opacity=".75" stroke=${G} stroke-width="1.200"/>`],
  ],
  [
    ['Appearance', svg`<circle cx="12" cy="12" r="5.500" fill="#dedede"/><circle cx="12" cy="12" r="8" fill="none" stroke=${G} stroke-width="1.100" stroke-dasharray="2 2"/>`],
    ['Graphic styles', svg`<path d="M7.500 12V4.500H20V18.500H12" fill="#666" stroke=${G} stroke-width="1.300"/><rect x="4.500" y="11.500" width="5" height="5" fill="#535353" stroke=${G} stroke-width="1.200"/><rect x="8.500" y="15" width="4" height="4" fill="#535353" stroke=${G} stroke-width="1.200"/>`],
  ],
  [
    ['Layers', svg`<path d="M12 4 20 9.500 12 15 4 9.500Z" fill="#d2d2d2"/><path d="M4 13.500 12 19 20 13.500" fill="none" stroke="#d2d2d2" stroke-width="2.300"/>`],
    ['Asset export', svg`<path d="M11 5.500H4.500V19.500H18.500V13" fill="none" stroke=${G} stroke-width="1.800"/><path d="M11 13 18 6" stroke=${G} stroke-width="2"/><path d="M13 3.500H20.500V11L17.800 8.500 15.500 6.200Z" fill=${G}/>`],
    ['Artboards', svg`<path d="M7.500 15.500H3.500V3.500H12.500V10" fill="none" stroke=${G} stroke-width="1.200"/><rect x="8.500" y="10.500" width="12" height="10" fill="none" stroke=${G} stroke-width="1.200"/>`],
  ],
];

@customElement('panel-dock')
class PanelDock extends LitElement {
  static styles = [base, css`
    :host { display: flex; flex-direction: column; background: #535353; border-left: 1px solid #3a3a3a; border-right: 1px solid #3a3a3a; }
    .head { height: 13px; background: #434343; border-bottom: 1px solid #3a3a3a; justify-content: flex-end; padding-right: 4px; }
    .group { display: flex; flex-direction: column; align-items: center; padding: 3px 0 1px 3px; border-bottom: 2px solid #3f3f3f; }
    .grip { width: 19px; height: 4px; margin-bottom: 3px; background: repeating-linear-gradient(90deg, #3a3a3a 0 1px, #535353 1px 2px); }
    .group button { width: 28px; height: 28px; border-radius: 3px; }
    .group .on { height: 22px; margin: 3px 0; background: #363636; border: 1px solid #2f2f2f; }
  `];
  render() {
    return html`
      <button class="head" aria-label="Collapse">${icon(10, 8, svg`<path d="M4.500 1.500 2 4 4.500 6.500M8 1.500 5.500 4 8 6.500" fill="none" stroke="#d0d0d0" stroke-width="1.300"/>`)}</button>
      ${DOCK.map((g) => html`<div class="group"><span class="grip"></span>
        ${g.map(([name, body]) => html`<button class=${classMap({ on: name === 'Layers' })} aria-label=${name}>${icon(24, 24, body)}</button>`)}
      </div>`)}
    `;
  }
}

/* ---------- layers panel ---------- */
interface Layer { name: string; color: string; lock?: boolean; kids?: boolean; full?: boolean; on?: boolean; art?: SVGTemplateResult; }
const blot = (d: string, c: string, w = 0) => svg`<path d=${d} fill=${w ? 'none' : c} stroke=${c} stroke-width=${w}/>`;
const LAYERS: Layer[] = [
  { name: 'shadow', color: '#e75555', lock: true, kids: true, full: true, art: blot('M1 5 8 3 15 5V11L8 13 1 11Z', '#f4e3da') },
  { name: 'building terr...', color: '#8c0000', lock: true, kids: true, full: true, art: blot('M2 11 9 7 14 5', '#fbf1e3', 2) },
  { name: 'context upper', color: '#5aff5a', kids: true, full: true, art: blot('M2 6 9 3 15 6V11L6 12Z', '#f8efe8') },
  { name: 'context dark', color: '#4ff5ff', lock: true, kids: true, full: true, art: blot('M0 7 3 4 15 3 16 9 11 12 2 13Z', '#e2b188') },
  { name: 'context light', color: '#f04df0', kids: true, full: true, art: blot('M2 5 7 8 7 12M13 5 10 11', '#f7ebe3', 3) },
  { name: 'lines', color: '#808080', kids: true, on: true, art: blot('M0 6 4 4 15 3 16 10 11 12 1 13Z', '#cf7720') },
  { name: 'terrain semi', color: '#000000', full: true },
  { name: 'terrain light', color: '#0a500a', full: true },
  { name: 'vegetation', color: '#646400', kids: true, full: true, art: blot('M2 13V10M12 4H14', '#ece9e6', 1.5) },
  { name: 'water body ...', color: '#0d9494', kids: true, full: true, art: blot('M1 14 6 11 14 3', '#ecd5c9', 2) },
  { name: 'Layer 12', color: '#c29a6c', full: true },
  { name: 'wall side', color: '#8c0a3c', kids: true, full: true, art: blot('M3 5 13 4M4 12 14 10', '#fdfbe8', 2) },
  { name: 'walls', color: '#8c3a0a', kids: true, art: blot('M1 9 11 2M5 15 16 7', '#f1e67e', 4) },
  { name: 'water', color: '#00007d', kids: true, full: true, art: blot('M1 9 3 12H7L9 9', '#f6e6a8', 1.5) },
  { name: 'glass', color: '#f595c4', kids: true, full: true, art: blot('M2 4 7 2M6 14 15 8', '#f9e9a9', 2) },
  { name: 'walls top', color: '#949cf5', kids: true, art: blot('M2 9 10 3M4 14 15 6', '#fbf1b2', 4) },
  { name: 'doors', color: '#8c0a0a', kids: true, art: svg`<path d="M1 8 9 2M7 15 15 6" stroke="#d8b852" stroke-width="1.800" stroke-dasharray="1.500 1.500"/>` },
  { name: 'Layer 21', color: '#f09a94', kids: true },
  { name: 'Terrain dark', color: '#f56b14', kids: true, full: true, art: svg`<path d="M3 8 6 11 7 6 10 9 12 5 15 7" fill="none" stroke="#dcc0c4" stroke-dasharray="1.500 1"/>` },
  { name: 'base', color: '#5080f0', kids: true },
];

@customElement('layers-panel')
class LayersPanel extends LitElement {
  @property({ attribute: false }) layers: Layer[] = LAYERS;
  static styles = [base, css`
    :host {
      display: block;
      background: #535353;
      border: 1px solid #3a3a3a;
      border-top: 4px solid #363636;
      box-shadow: -2px 2px 4px rgba(0, 0, 0, 0.35);
      font: 10px/14px "Open Sans", "Noto Sans", sans-serif;
      color: #f0f0f0;
    }
    .tabs { display: flex; height: 26px; background: #454545; }
    .tabs button { padding: 0 8px; color: #a4a4a4; border: solid #3a3a3a; border-width: 0 1px 1px 0; overflow: hidden; white-space: nowrap; justify-content: flex-start; }
    .tabs .now { width: 48px; padding: 0 8px; background: #535353; color: #f4f4f4; font-weight: 600; border-width: 0 1px 0 0; }
    .tabs .cut { width: 64px; padding-right: 0; font-weight: 600; }
    .tabs .last { width: 64px; font-weight: 600; }
    .tabs .rest { flex: 1; border-bottom: 1px solid #3a3a3a; display: flex; align-items: center; justify-content: flex-end; padding-right: 5px; gap: 6px; }
    .tabs .rest button { padding: 0; border: 0; }
    .bar { width: 1px; height: 12px; background: #9a9a9a; }
    .list { margin: 7px 5px 0 5px; padding-bottom: 49px; border: 1px solid #616161; border-radius: 2px; }
    .row { display: flex; height: 21px; align-items: center; border-bottom: 1px solid #616161; position: relative; }
    .on { background: #4d6680; }
    .eye { width: 21px; height: 20px; border-right: 1px solid #616161; }
    .lock { width: 21px; height: 20px; }
    .hue { width: 4px; height: 18px; margin-right: 1px; }
    .open { width: 18px; height: 20px; margin: 0 7px 0 0; }
    .thumb { width: 18px; height: 18px; background: #fff; border: 1px solid #000; }
    .label { flex: 1; padding-left: 5px; white-space: nowrap; }
    .target { width: 22px; height: 20px; border-left: 1px solid #616161; }
    .mark { width: 14px; display: flex; }
    .mark i { width: 6px; height: 6px; border: 1px solid #111; background: #808080; box-sizing: border-box; }
    .on::after { content: ""; position: absolute; right: 0; top: 0; border: 3px solid; border-color: #e0e0e0 #e0e0e0 transparent transparent; }
    .foot { display: flex; align-items: center; height: 19px; padding: 0 19px 0 5px; }
    .foot span { flex: 1; }
    .foot button { width: 26px; height: 18px; }
    .base { display: flex; justify-content: center; align-items: center; height: 8px; border-top: 1px solid #3a3a3a; }
    .base i { width: 19px; height: 4px; background: repeating-linear-gradient(90deg, #3a3a3a 0 1px, #535353 1px 2px); }
  `];
  render() {
    return html`
      <div class="tabs">
        <button class="now">Layers</button>
        <button class="cut">Asset Expor</button>
        <button class="last">Artboards</button>
        <span class="rest">
          <button aria-label="Collapse">${icon(12, 8, svg`<path d="M1 1 4 4 1 7M5.500 1 8.500 4 5.500 7" fill="none" stroke="#c8c8c8" stroke-width="1.200"/>`)}</button>
          <i class="bar"></i>
          <button aria-label="Panel menu">${icon(10, 8, svg`<path d="M0 1H10M0 4H10M0 7H10" stroke="#c8c8c8"/>`)}</button>
        </span>
      </div>
      <ul class="list">
        ${this.layers.map((l) => html`
          <li class=${classMap({ row: true, on: !!l.on })}>
            <button class="eye" aria-label="Toggle ${l.name}">${icon(12, 9, svg`<path d="M0 4.500C3 .2 9 .2 12 4.500 9 8.800 3 8.800 0 4.500Z" fill=${G}/><circle cx="6" cy="4.500" r="2.500" fill="#535353"/><circle cx="6" cy="4.500" r="1.200" fill=${G}/>`)}</button>
            <button class="lock" aria-label="Lock ${l.name}">${l.lock ? icon(8, 11, svg`<path d="M0 5H8V11H0Z" fill=${G}/><path d="M2 5V3A2 2 0 0 1 6 3V5" fill="none" stroke=${G} stroke-width="1.300"/><path d="M4 7V9" stroke="#535353"/>`) : nothing}</button>
            <i class="hue" style=${styleMap({ background: l.color })}></i>
            <button class="open" aria-label="Expand ${l.name}">${l.kids ? chevRight() : nothing}</button>
            <span class="thumb">${icon(16, 16, svg`${l.art ?? nothing}`)}</span>
            <span class="label">${l.name}</span>
            <button class="target" aria-label="Target ${l.name}">${icon(9, 9, svg`<circle cx="4.500" cy="4.500" r="3.700" fill=${l.full ? '#8f8f8f' : 'none'} stroke=${G} stroke-width="1.200"/>`)}</button>
            <span class="mark">${l.on ? html`<i></i>` : nothing}</span>
          </li>`)}
      </ul>
      <div class="foot">
        <span>20 Layers</span>
        <button aria-label="Export">${icon(13, 13, svg`<path d="M6 2.500H1.500V11.500H10.500V7M5.500 7.500 11.500 1.500M8 1H12V5" fill="none" stroke=${G} stroke-width="1.200"/>`)}</button>
        <button aria-label="Find">${icon(13, 13, svg`<circle cx="5" cy="5" r="3.800" fill="none" stroke=${G} stroke-width="1.200"/><path d="M8 8 12 12.500" stroke=${G} stroke-width="1.600"/>`)}</button>
        <button aria-label="Clipping mask">${icon(12, 12, svg`<rect x="4" y="4" width="7" height="7" fill="none" stroke="#8b8b8b"/><rect x="1" y="1" width="7.500" height="7.500" fill="#535353" stroke=${G} stroke-width="1.200"/><path d="M4 4H9V9H4Z" fill=${G}/>`)}</button>
        <button aria-label="New sublayer">${icon(16, 12, svg`<path d="M1 0V4.500H5.500M4 2.500 6 4.500 4 6.500" fill="none" stroke=${G} stroke-width="1.200"/><rect x="7" y="2.500" width="8.500" height="8.500" fill="none" stroke=${G}/><path d="M11.250 4.500V9M9 6.750H13.500" stroke=${G} stroke-width="1.200"/>`)}</button>
        <button aria-label="New layer">${icon(12, 12, svg`<rect x=".5" y=".5" width="11" height="11" fill="none" stroke=${G}/><path d="M6 3V9M3 6H9" stroke=${G} stroke-width="1.200"/>`)}</button>
        <button aria-label="Delete">${icon(11, 13, svg`<path d="M0 2.500H11M3.500 2.500V.7H7.500V2.500M1.500 3V12.300H9.500V3M4 4.500V11M5.500 4.500V11M7 4.500V11" fill="none" stroke=${G} stroke-width="1.100"/>`)}</button>
      </div>
      <div class="base"><i></i></div>
    `;
  }
}

/* ---------- application ---------- */
@customElement('app-root')
class AppRoot extends LitElement {
  static styles = [base, css`
    :host { display: flex; flex-direction: column; height: 100vh; background: #3a3a3a; font: 10px/14px "Open Sans", "Noto Sans", sans-serif; color: #ececec; }
    .body { flex: 1; min-height: 0; display: grid; grid-template-columns: 40px 1fr 40px; }
    .doc { position: relative; display: flex; flex-direction: column; min-width: 0; padding: 0 1px 2px 2px; }
    .tabs { display: flex; height: 30px; background: #424242; border-bottom: 1px solid #363636; flex: none; }
    .tab { padding: 0 24px 0 9px; background: #535353; font-weight: 600; font-size: 11px; align-items: center; color: #f0f0f0; }
    .view { flex: 1; min-height: 0; display: flex; }
    art-board { flex: 1; }
    .vscroll { width: 16px; display: flex; flex-direction: column; justify-content: space-between; align-items: center; padding: 5px 0; background: #4a4a4a; flex: none; }
    .status { display: flex; align-items: center; height: 15px; background: #4a4a4a; flex: none; }
    .info { display: flex; align-items: center; width: 432px; height: 15px; background: #535353; padding-left: 4px; }
    .info input { width: 49px; height: 15px; padding-left: 3px; }
    .info .page { width: 40px; margin-left: 7px; }
    .drop { width: 18px; height: 15px; }
    .nav { gap: 12px; width: 36px; }
    .tool { margin-left: 86px; width: 123px; color: #c8c8c8; }
    .h { flex: 1; display: flex; align-items: center; padding: 0 5px 0 3px; }
    .thumb { width: 26px; height: 11px; margin: 0 auto 0 48%; border-radius: 6px; background: #686868; }
    layers-panel { position: absolute; right: 0; top: 342px; width: 241px; z-index: 2; }
    .corner { width: 16px; height: 15px; background: #535353; }
  `];
  render() {
    const arrow = (d: string) => icon(10, 10, svg`<path d=${d} fill="none" stroke="#a0a0a0" stroke-width="1.300"/>`);
    return html`
      <menu-bar></menu-bar>
      <control-bar></control-bar>
      <div class="body">
        <tool-bar></tool-bar>
        <main class="doc">
          <div class="tabs"><button class="tab">Full Building with site axo.ai* @ 320</button></div>
          <div class="view">
            <art-board></art-board>
            <div class="vscroll">
              <button aria-label="Scroll up">${arrow('M2 6.500 5 3.500 8 6.500')}</button>
              <button aria-label="Scroll down">${arrow('M2 3.500 5 6.500 8 3.500')}</button>
            </div>
          </div>
          <div class="status">
            <div class="info">
              <input aria-label="Zoom" value="3200%">
              <button class="drop" aria-label="Zoom levels">${chevDown()}</button>
              <button class="nav" aria-label="Previous artboard">${icon(30, 10, svg`<path d="M6 1H7.500V9H6ZM13 1V9L8 5ZM29 1V9L24 5Z" fill="#757575"/>`)}</button>
              <input class="page" aria-label="Artboard" value="1">
              <button class="drop" aria-label="Artboards">${chevDown()}</button>
              <button class="nav" aria-label="Next artboard">${icon(30, 10, svg`<path d="M5 1V9L10 5ZM19 1V9L24 5ZM24.500 1H26V9H24.500Z" fill="#757575"/>`)}</button>
              <span class="tool">Selection</span>
              <button aria-label="Status options">${icon(8, 10, svg`<path d="M1.500 0.500V9.500L6.500 5Z" fill="#e6e6e6"/>`)}</button>
            </div>
            <div class="h">
              <button aria-label="Scroll left">${arrow('M6.500 2 3.500 5 6.500 8')}</button>
              <i class="thumb"></i>
              <button aria-label="Scroll right">${arrow('M3.500 2 6.500 5 3.500 8')}</button>
            </div>
            <span class="corner"></span>
          </div>
          <layers-panel></layers-panel>
        </main>
        <panel-dock></panel-dock>
      </div>
    `;
  }
}
